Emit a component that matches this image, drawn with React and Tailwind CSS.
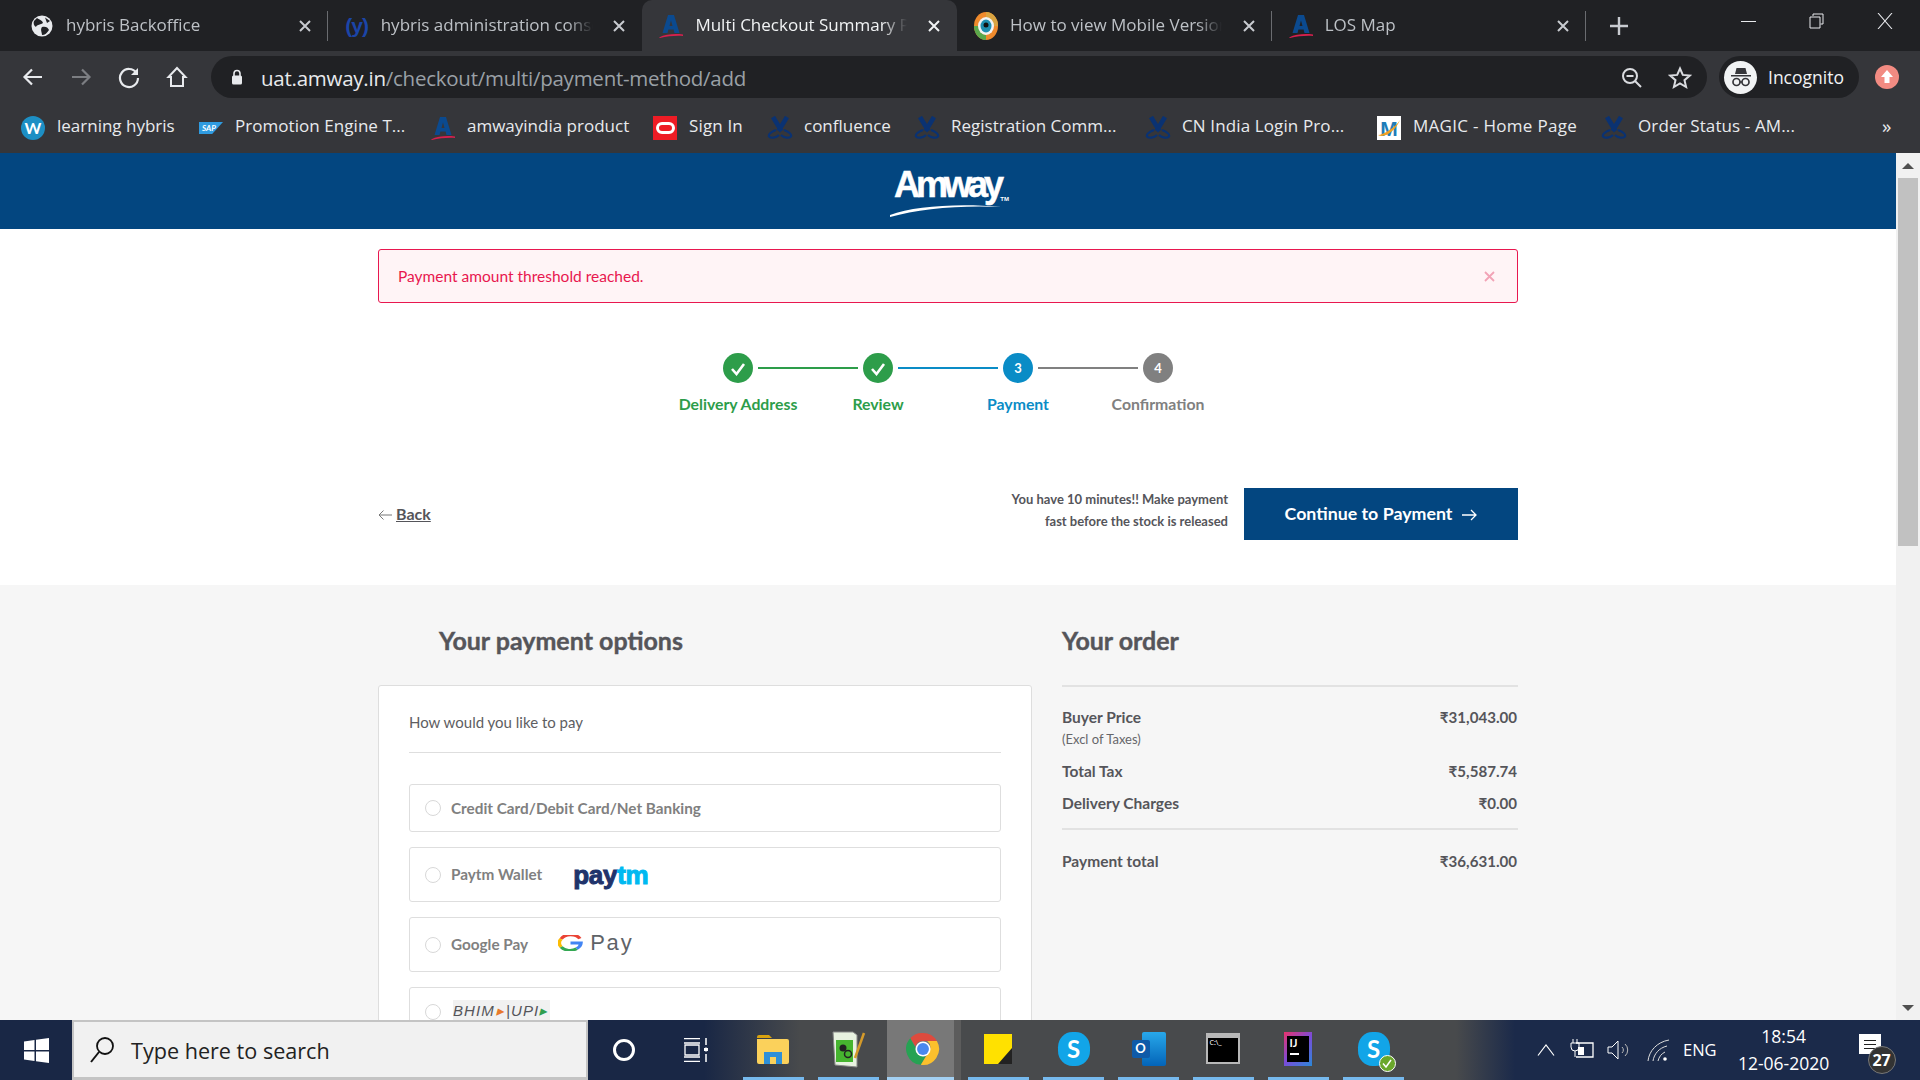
import React from "react";

const ui = "font-['Open_Sans','Noto_Sans',sans-serif]";
const web = "font-['Lato','Noto_Sans',sans-serif]";
const arial = "font-['Liberation_Sans',sans-serif]";

function CloseX({ color = "#dadce0" }) {
  return (
    <svg width="12" height="12" viewBox="0 0 12 12" className="shrink-0">
      <path d="M1 1l10 10M11 1L1 11" stroke={color} strokeWidth="2" />
    </svg>
  );
}

function AmwayFav({ size = 24 }) {
  return (
    <svg width={size} height={size} viewBox="0 0 24 24" className="shrink-0">
      <path d="M9 1 H15 L20.500 19 H15.500 L14.600 15.500 H9.400 L8.500 19 H3.500 Z M12 6.500 L10.500 12 H13.500 Z" fill="#0b4a8f" fillRule="evenodd" />
      <path d="M0 23.500 C7 20 16 19.500 24 20.500 L24 22 C16 21.500 8 22.500 1 24Z" fill="#d6204e" />
    </svg>
  );
}

function ScissorX() {
  return (
    <svg width="26" height="24" viewBox="0 0 26 24" className="shrink-0">
      <path d="M6 1 L14.500 15 M20 1 L11.500 15" stroke="#0a3272" strokeWidth="4.600" fill="none" />
      <path d="M9 14 C4 16 1 18 2 20.500 C4 22.500 9 22 12 19 M17 14 C22 16 25 18 24 20.500 C22 22.500 17 22 14 19" stroke="#0a3272" strokeWidth="2.200" fill="none" />
    </svg>
  );
}

function GlobeFav() {
  return (
    <svg width="22" height="22" viewBox="0 0 22 22" className="shrink-0">
      <circle cx="11" cy="11" r="10.500" fill="#e8eaed" />
      <path d="M6 3 C9 5 11 5 12 8 C10 10 6 9 5 12 C3 11 2 8 3 6Z M11 12 C14 11 17 12 18 15 C16 18 14 20 11 20 C11 17 9 15 11 12Z M14 2.500 L19 6 L16 8Z" fill="#202124" />
    </svg>
  );
}

function ChromeIcon({ size = 36 }) {
  return (
    <svg width={size} height={size} viewBox="0 0 36 36" className="shrink-0">
      <path d="M18 1a17 17 0 0 1 14.700 8.500H18a8.500 8.500 0 0 0-8 5.500L4.500 6.500A17 17 0 0 1 18 1z" fill="#dd4b3e" />
      <path d="M4.500 6.500L12 20a8.500 8.500 0 0 0 9 5.900L15.700 34.800A17 17 0 0 1 4.500 6.500z" fill="#26a253" />
      <path d="M32.700 9.500A17 17 0 0 1 15.700 34.800L23.500 22a8.500 8.500 0 0 0-1-12.500z" fill="#fbc02d" />
      <circle cx="18" cy="18" r="8" fill="#fff" />
      <circle cx="18" cy="18" r="6.300" fill="#4a88ee" />
    </svg>
  );
}

function TabFavMobile() {
  return (
    <svg width="24" height="28" viewBox="0 0 24 28" className="shrink-0">
      <ellipse cx="12" cy="14" rx="12" ry="14" fill="#ef8a2c" />
      <path d="M12 0a12 14 0 0 1 12 14h-5a7 8 0 0 0-7-8z" fill="#d9a441" />
      <path d="M0 14a12 14 0 0 0 12 14v-5a7 8 0 0 1-7-9z" fill="#5aa84c" />
      <ellipse cx="12" cy="14" rx="8" ry="9" fill="#f3f3f3" />
      <ellipse cx="12" cy="14" rx="5.500" ry="6.500" fill="#1e8fb0" />
      <circle cx="12" cy="13" r="2.500" fill="#111" />
    </svg>
  );
}

function Tab({ icon, title, active, sep }) {
  return (
    <div className={"relative flex h-[51px] w-[314.700px] shrink-0 items-center pl-[17px] pr-[17px] " + (active ? "rounded-t-[10px] bg-[#35363a]" : "")}>
      <div className="flex w-[24px] shrink-0 justify-center">{icon}</div>
      <div className={"mb-[2px] ml-[12px] w-[212px] overflow-hidden whitespace-nowrap text-[17px] leading-[24px] [mask-image:linear-gradient(90deg,#000_88%,transparent_100%)] " + ui + " " + (active ? "text-[#f1f3f4]" : "text-[#bdc1c6]")}>
        {title}
      </div>
      <div className="ml-auto"><CloseX color={active ? "#f1f3f4" : "#c8cbd0"} /></div>
      {sep && <div className="absolute right-0 top-[11px] h-[30px] w-[1px] bg-[#6a6c70]" />}
    </div>
  );
}

function Mark({ kind }) {
  if (kind === "wp")
    return (
      <div className={"flex h-[24px] w-[24px] items-center justify-center rounded-full bg-[#1d8fc4] text-[16px] font-bold text-white " + web}>W</div>
    );
  if (kind === "sap")
    return (
      <div className={"flex h-[12px] w-[24px] items-center justify-center bg-[#2f9be0] pr-[4px] text-[8px] font-bold italic leading-none text-white [clip-path:polygon(0_0,100%_0,55%_100%,0_100%)] " + web}>SAP</div>
    );
  if (kind === "am") return <AmwayFav />;
  if (kind === "or")
    return (
      <div className="flex h-[24px] w-[24px] items-center justify-center bg-[#ee1c25]">
        <div className="h-[12px] w-[19px] rounded-[6px] border-[3px] border-white" />
      </div>
    );
  if (kind === "x") return <ScissorX />;
  if (kind === "m")
    return (
      <div className="relative flex h-[24px] w-[24px] items-center justify-center overflow-hidden bg-white">
        <span className={"text-[21px] font-black leading-none text-[#1f7cb8] " + arial}>M</span>
        <svg width="24" height="24" viewBox="0 0 24 24" className="absolute inset-0">
          <path d="M1 19 C6 19 18 12 23 4 C19 14 8 23 1 19Z" fill="#f0a020" />
        </svg>
      </div>
    );
  return null;
}

const bookmarks = [
  { k: "wp", t: "learning hybris", w: "w-[199px] pl-[21px]", s: "" },
  { k: "sap", t: "Promotion Engine T...", w: "w-[232px]", s: "tracking-[0.050px]" },
  { k: "am", t: "amwayindia product", w: "w-[222px]", s: "" },
  { k: "or", t: "Sign In", w: "w-[115px]", s: "tracking-[0.150px]" },
  { k: "x", t: "confluence", w: "w-[147px]", s: "" },
  { k: "x", t: "Registration Comm...", w: "w-[231px]", s: "" },
  { k: "x", t: "CN India Login Pro...", w: "w-[231px]", s: "tracking-[0.120px]" },
  { k: "m", t: "MAGIC - Home Page", w: "w-[225px]", s: "tracking-[0.290px]" },
  { k: "x", t: "Order Status - AM...", w: "w-[231px]", s: "tracking-[0.120px]" },
];

function ChromeBar() {
  return (
    <div className="shrink-0">
      <div className="flex h-[51px] items-end bg-[#202124] pl-[13px]">
        <Tab icon={<GlobeFav />} title="hybris Backoffice" sep />
        <Tab
          icon={<span className={"text-[21px] font-black leading-none tracking-[-1px] text-[#1b45a8] " + arial}>(y)</span>}
          title="hybris administration console"
        />
        <Tab icon={<AmwayFav />} title="Multi Checkout Summary Page" active />
        <Tab icon={<TabFavMobile />} title="How to view Mobile Version of" sep />
        <Tab icon={<AmwayFav />} title="LOS Map" sep />
        <svg width="18" height="18" viewBox="0 0 18 18" className="ml-[24px] mb-[16px] shrink-0">
          <path d="M9 0v18M0 9h18" stroke="#c8cbd0" strokeWidth="2.400" />
        </svg>
        <div className="ml-auto flex h-[51px] items-start">
          <div className="flex h-[42px] w-[68px] items-center justify-center">
            <div className="h-[1px] w-[15px] bg-[#e8eaed]" />
          </div>
          <div className="flex h-[42px] w-[68px] items-center justify-center">
            <svg width="15" height="16" viewBox="0 0 15 16">
              <path d="M4 3V1h10v10h-2.500M1 4h10v11H1z" stroke="#e8eaed" fill="none" />
            </svg>
          </div>
          <div className="flex h-[42px] w-[70px] items-center justify-center">
            <svg width="16" height="16" viewBox="0 0 16 16">
              <path d="M1 0l14 16M15 0L1 16" stroke="#e8eaed" strokeWidth="1.100" />
            </svg>
          </div>
        </div>
      </div>
      <div className="flex h-[52px] items-center bg-[#35363a]">
        <div className="flex w-[211px] shrink-0 items-center pl-[21px]">
          <svg width="24" height="24" viewBox="0 0 24 24" className="mr-[24px]">
            <path d="M21 12H4M11 4.500L3.500 12l7.500 7.500" stroke="#e8eaed" strokeWidth="2.200" fill="none" />
          </svg>
          <svg width="24" height="24" viewBox="0 0 24 24" className="mr-[24px]">
            <path d="M3 12h17M13 4.500l7.500 7.500-7.500 7.500" stroke="#7c7e82" strokeWidth="2.200" fill="none" />
          </svg>
          <svg width="24" height="24" viewBox="0 0 24 24" className="mr-[24px]">
            <path d="M19.500 8A9 9 0 1 0 21 13" stroke="#e8eaed" strokeWidth="2.200" fill="none" />
            <path d="M21 3v7h-7z" fill="#e8eaed" />
          </svg>
          <svg width="24" height="24" viewBox="0 0 24 24">
            <path d="M12 3L3.500 12H6v9h12v-9h2.500z" stroke="#e8eaed" strokeWidth="2" fill="none" />
          </svg>
        </div>
        <div className="flex h-[42px] w-[1496px] shrink-0 items-center rounded-full bg-[#202124] pl-[20px] pr-[15px]">
          <svg width="12" height="16" viewBox="0 0 12 16" className="shrink-0">
            <path d="M3 7V4.500a3 3 0 0 1 6 0V7" stroke="#e8eaed" strokeWidth="1.600" fill="none" />
            <rect x="1" y="6.500" width="10" height="9" rx="1.500" fill="#e8eaed" />
          </svg>
          <div className={"ml-[18px] mt-[2px] whitespace-nowrap text-[20.500px] leading-[28px] tracking-[-0.250px] " + ui}>
            <span className="text-[#e8eaed]">uat.amway.in</span>
            <span className="text-[#9aa0a6]">/checkout/multi/payment-method/add</span>
          </div>
          <div className="ml-auto mt-[1px] flex items-center gap-[24px]">
            <svg width="24" height="24" viewBox="0 0 24 24">
              <circle cx="10" cy="10" r="7" stroke="#dadce0" strokeWidth="2" fill="none" />
              <path d="M6.500 10h7M15 15l6 6" stroke="#dadce0" strokeWidth="2" />
            </svg>
            <svg width="24" height="24" viewBox="0 0 24 24">
              <path d="M12 2.500l2.800 6.400 7 .7-5.300 4.600 1.600 6.800-6.100-3.600-6.100 3.600 1.600-6.800-5.300-4.600 7-.7z" stroke="#dadce0" strokeWidth="2" fill="none" />
            </svg>
          </div>
        </div>
        <div className="ml-[12px] flex h-[42px] w-[140px] shrink-0 items-center rounded-full bg-[#202124] pl-[5px]">
          <div className="flex h-[33px] w-[33px] shrink-0 items-center justify-center rounded-full bg-[#f1f3f4]">
            <svg width="26" height="26" viewBox="0 0 26 26">
              <path d="M3 11h20v1.500H3zM7 10l1.500-6h9L19 10z" fill="#35363a" />
              <circle cx="8.500" cy="18" r="3.500" stroke="#35363a" strokeWidth="1.700" fill="none" />
              <circle cx="17.500" cy="18" r="3.500" stroke="#35363a" strokeWidth="1.700" fill="none" />
              <path d="M12 18h2" stroke="#35363a" strokeWidth="1.700" />
            </svg>
          </div>
          <span className={"ml-[11px] text-[17.500px] text-[#f1f3f4] " + ui}>Incognito</span>
        </div>
        <div className="ml-[16px] flex h-[24px] w-[24px] shrink-0 items-center justify-center rounded-full bg-[#f28b82]">
          <svg width="14" height="16" viewBox="0 0 14 16">
            <path d="M7 1l6 7H9.500v6h-5V8H1z" fill="#fff" />
          </svg>
        </div>
      </div>
      <div className="flex h-[50px] items-center bg-[#35363a]">
        {bookmarks.map((b, i) => (
          <div key={i} className={"flex h-[50px] shrink-0 items-center " + b.w}>
            <div className="flex w-[24px] shrink-0 justify-center"><Mark kind={b.k} /></div>
            <span className={"mb-[4px] ml-[12px] whitespace-nowrap text-[17px] leading-[24px] text-[#e8eaed] " + ui + " " + b.s}>{b.t}</span>
          </div>
        ))}
        <span className={"mb-[4px] ml-[49px] text-[19px] leading-[24px] text-[#e8eaed] " + ui}>»</span>
      </div>
    </div>
  );
}

function Check() {
  return (
    <svg width="16" height="14" viewBox="0 0 16 14">
      <path d="M2 7l4.500 5L14 2" stroke="#fff" strokeWidth="2.600" fill="none" />
    </svg>
  );
}

function Circle({ bg, children }) {
  return (
    <div className={"flex h-[30px] w-[30px] shrink-0 items-center justify-center rounded-full pt-[1px] text-[13px] font-bold text-white " + bg}>
      {children}
    </div>
  );
}

function Stepper() {
  return (
    <div className="mt-[50px]">
      <div className="flex items-center justify-center">
        <Circle bg="bg-[#2d9d4a]"><Check /></Circle>
        <div className="mx-[5px] h-[2px] w-[100px] bg-[#2d9d4a]" />
        <Circle bg="bg-[#2d9d4a]"><Check /></Circle>
        <div className="mx-[5px] h-[2px] w-[100px] bg-[#0a8cc6]" />
        <Circle bg="bg-[#0a8cc6]">3</Circle>
        <div className="mx-[5px] h-[2px] w-[100px] bg-[#808080]" />
        <Circle bg="bg-[#808080]">4</Circle>
      </div>
      <div className="mt-[11px] flex justify-center text-center text-[15.800px] font-bold leading-[20px]">
        <div className="w-[140px] text-[#2d9d4a]">Delivery Address</div>
        <div className="w-[140px] text-[#2d9d4a]">Review</div>
        <div className="w-[140px] text-[#0a8cc6]">Payment</div>
        <div className="w-[140px] text-[#808080]">Confirmation</div>
      </div>
    </div>
  );
}

function PayRow({ h, radio = "", children }) {
  return (
    <div className={"flex items-center rounded-[3px] border border-[#dedede] pl-[15px] " + h}>
      <div className={"h-[16px] w-[16px] shrink-0 rounded-full border border-[#d8d8d8] " + radio} />
      {children}
    </div>
  );
}

function OrderRow({ label, value, mt }) {
  return (
    <div className={"flex items-center justify-between text-[15.500px] font-bold leading-[20px] text-[#55555a] " + mt}>
      <span>{label}</span>
      <span className="mr-[1px] text-[15.100px]">{value}</span>
    </div>
  );
}

function Page() {
  return (
    <div className={"min-w-0 flex-1 overflow-hidden bg-white " + web}>
      <div className="flex h-[76px] items-center justify-center bg-[#034680]">
        <div className="relative h-[52px] w-[118px]">
          <span className={"absolute left-[5px] top-[-2px] text-[36px] font-bold leading-[44px] tracking-[-4px] text-white [-webkit-text-stroke:0.5px_#fff] " + arial}>Amway</span>
          <span className={"absolute right-[-2px] top-[31px] text-[6px] font-bold leading-none text-white " + arial}>TM</span>
          <svg width="118" height="14" viewBox="0 0 118 14" className="absolute left-0 top-[38px]">
            <path d="M1 12 C25 3 70 0 112 4 C70 2 30 6 1 14Z" fill="#fff" />
          </svg>
        </div>
      </div>
      <div className="mx-auto w-[1140px]">
        <div className="mt-[20px] flex h-[54px] items-center justify-between rounded-[3px] border border-[#e8174f] bg-[#fff4f6] pl-[19px] pr-[22px] pt-[1px] text-[15.500px] text-[#e8174f]">
          <span>Payment amount threshold reached.</span>
          <svg width="11" height="11" viewBox="0 0 11 11">
            <path d="M1 1l9 9M10 1l-9 9" stroke="#f2a3b6" strokeWidth="1.800" />
          </svg>
        </div>
        <Stepper />
        <div className="mt-[74px] flex h-[52px] items-center justify-between">
          <div className="flex items-center">
            <svg width="14" height="10" viewBox="0 0 14 10" className="mr-[4px] mt-[2px]">
              <path d="M14 5H1M5.500.5L1 5l4.500 4.500" stroke="#777" strokeWidth="1" fill="none" />
            </svg>
            <span className="text-[16px] font-bold text-[#55555a] underline">Back</span>
          </div>
          <div className="flex items-center">
            <div className="mb-[9px] mr-[16px] text-right text-[13px] font-bold leading-[22px] text-[#55555a]">
              You have 10 minutes!! Make payment<br />fast before the stock is released
            </div>
            <div className="flex h-[52px] w-[274px] items-center justify-center bg-[#034680] pb-[1px] text-[17.800px] font-bold text-white">
              Continue to Payment
              <svg width="15" height="12" viewBox="0 0 15 12" className="ml-[10px] mt-[3px]">
                <path d="M0 6h14M9 1l5 5-5 5" stroke="#fff" strokeWidth="1.300" fill="none" />
              </svg>
            </div>
          </div>
        </div>
      </div>
      <div className="mt-[45px] h-[600px] bg-[#f6f6f6]">
        <div className="mx-auto flex w-[1140px]">
          <div className="w-[654px] shrink-0">
            <div className="mt-[36px] pl-[61px] text-[25px] font-bold leading-[38px] text-[#55555a] [-webkit-text-stroke:0.4px_#55555a]">Your payment options</div>
            <div className="mt-[26px] rounded-[3px] border border-[#dedede] bg-white px-[30px]">
              <div className="flex h-[67px] items-center border-b border-[#dedede] pt-[5px] text-[15px] leading-[20px] text-[#5e5e62]">How would you like to pay</div>
              <div className="mt-[31px] flex flex-col gap-[15px] pb-[30px] text-[15.300px] font-bold text-[#808080]">
                <PayRow h="h-[48px]"><span className="ml-[10px]">Credit Card/Debit Card/Net Banking</span></PayRow>
                <PayRow h="h-[55px]">
                  <span className="ml-[10px]">Paytm Wallet</span>
                  <span className={"ml-[31px] text-[26px] font-bold leading-none tracking-[-0.300px] " + arial}>
                    <span className="text-[#20336b] [-webkit-text-stroke:1px_#20336b]">pay</span><span className="text-[#00b9f1] [-webkit-text-stroke:1px_#00b9f1]">tm</span>
                  </span>
                </PayRow>
                <PayRow h="h-[55px]">
                  <span className="ml-[10px]">Google Pay</span>
                  <span className="mb-[3px] ml-[30px] flex items-center">
                    <svg width="25" height="16" viewBox="0 0 24 20" preserveAspectRatio="none">
                      <path d="M21 4.500A10 9 0 0 0 3 5" stroke="#ea4335" strokeWidth="3.500" fill="none" />
                      <path d="M3 5a10 9 0 0 0 0 10" stroke="#fbbc04" strokeWidth="3.500" fill="none" />
                      <path d="M3 15a10 9 0 0 0 15 2" stroke="#34a853" strokeWidth="3.500" fill="none" />
                      <path d="M18 17a9 9 0 0 0 4-7H12" stroke="#4285f4" strokeWidth="3.500" fill="none" />
                    </svg>
                    <span className={"ml-[7px] text-[22px] font-normal leading-none tracking-[1.800px] text-[#5f6368] " + arial}>Pay</span>
                  </span>
                </PayRow>
                <PayRow h="h-[55px]" radio="mb-[6px]">
                  <span className={"mb-[9px] ml-[12px] flex h-[20px] items-center bg-[#f1f1f1] pr-[2px] text-[15px] font-normal italic leading-none tracking-[1.100px] text-[#55555a] " + arial}>
                    BHIM<span className="mx-[1px] text-[#e8792b]">▸</span>|UPI<span className="text-[#2f9e4f]">▸</span>
                  </span>
                </PayRow>
              </div>
            </div>
          </div>
          <div className="ml-[30px] flex-1">
            <div className="mt-[36px] text-[25px] font-bold leading-[38px] text-[#55555a] [-webkit-text-stroke:0.4px_#55555a]">Your order</div>
            <div className="mt-[26px] border-t-2 border-[#e2e2e2]">
              <OrderRow mt="mt-[20px]" label="Buyer Price" value="₹31,043.00" />
              <div className="mt-[2px] text-[13px] leading-[20px] text-[#66666a]">(Excl of Taxes)</div>
              <OrderRow mt="mt-[12px]" label="Total Tax" value="₹5,587.74" />
              <OrderRow mt="mt-[12px]" label="Delivery Charges" value="₹0.00" />
              <div className="mt-[15px] border-t-2 border-[#e2e2e2]" />
              <OrderRow mt="mt-[21px]" label="Payment total" value="₹36,631.00" />
            </div>
          </div>
        </div>
      </div>
    </div>
  );
}

function Scrollbar() {
  return (
    <div className="flex w-[24px] shrink-0 flex-col bg-[#f1f1f1]">
      <div className="flex h-[25px] items-center justify-center">
        <div className="h-0 w-0 border-x-[6px] border-b-[6px] border-x-transparent border-b-[#505050]" />
      </div>
      <div className="mx-[2px] h-[368px] bg-[#c1c1c1]" />
      <div className="flex flex-1 items-end justify-center pb-[9px]">
        <div className="h-0 w-0 border-x-[6px] border-t-[6px] border-x-transparent border-t-[#505050]" />
      </div>
    </div>
  );
}

function Slot({ children, mode }) {
  return (
    <div className="relative flex h-[60px] w-[75px] shrink-0 items-center justify-center">
      {mode === "active" && <div className="absolute inset-y-0 left-[1px] w-[67px] bg-[#787878]" />}
      {mode === "active" && <div className="absolute inset-y-0 left-[68px] w-[7px] bg-[#5c5c5c]" />}
      <div className="relative mb-[3px]">{children}</div>
      <div className={"absolute bottom-0 h-[3px] " + (mode === "active" ? "left-[1px] w-[67px] bg-[#a3d0f2]" : "left-[7px] w-[61px] bg-[#76b9ed]")} />
    </div>
  );
}

function SkypeGlyph({ size = 34 }) {
  return (
    <div style={{ width: size, height: size + 2 }} className={"flex items-center justify-center rounded-[45%] bg-[#12a5e8] font-bold text-white " + web}>
      <span className="text-[24px] leading-none">S</span>
    </div>
  );
}

function Taskbar() {
  return (
    <div className="flex h-[60px] shrink-0 items-center bg-[linear-gradient(90deg,#192745_0,#192745_704px,#484a4c_800px,#484a4c_1456px,#1b2a4a_1515px,#1b2a4a_100%)]">
      <div className="flex h-[60px] w-[72px] shrink-0 items-center justify-center">
        <svg width="25" height="25" viewBox="0 0 25 25">
          <path d="M0 3.500l10.500-1.500v10H0zM12 1.800L25 0v12H12zM0 13.500h10.500V23L0 21.500zM12 13.500h13V25l-13-1.800z" fill="#fff" />
        </svg>
      </div>
      <div className="flex h-[60px] w-[516px] shrink-0 items-center border-[2px] border-b-[3px] border-[#c4c4c4] bg-[#f1f1f1] pl-[15px]">
        <svg width="26" height="28" viewBox="0 0 26 28">
          <circle cx="16" cy="10" r="8" stroke="#111" strokeWidth="1.800" fill="none" />
          <path d="M10 16L2 26" stroke="#111" strokeWidth="2" />
        </svg>
        <span className={"ml-[16px] mt-[3px] text-[21.600px] text-[#222] " + ui}>Type here to search</span>
      </div>
      <div className="flex h-[60px] w-[72px] shrink-0 items-center justify-center">
        <div className="h-[22px] w-[22px] rounded-full border-[3px] border-white" />
      </div>
      <div className="flex h-[60px] w-[76px] shrink-0 items-center justify-center pr-[4px]">
        <svg width="26" height="24" viewBox="0 0 26 24">
          <path d="M1 .5h16M1 23.500h16M1 5h16M1 19h16M2 7v10h14V7z" stroke="#fff" strokeWidth="1.300" fill="none" />
          <path d="M23 0v7M23 9.500v4M23 16v8" stroke="#fff" strokeWidth="1.500" />
          <path d="M21 10h4v3h-4z" fill="#fff" />
        </svg>
      </div>
      <Slot>
        <div className="mr-[2px]">
          <svg width="32" height="30" viewBox="0 0 32 30">
            <path d="M0 3a2 2 0 0 1 2-2h10l3 3H0z" fill="#d9a20e" />
            <path d="M0 5h30a2 2 0 0 1 2 2v21a2 2 0 0 1-2 2H2a2 2 0 0 1-2-2z" fill="#fbd15b" />
            <path d="M7 30V18h18v12h-6v-7h-6v7z" fill="#2e8fd8" />
          </svg>
        </div>
      </Slot>
      <Slot>
        <svg width="36" height="38" viewBox="0 0 36 38">
          <path d="M2 2h20l4 3v32l-22-2z" fill="#e8f2e0" stroke="#888" />
          <path d="M5 10h17v22H5z" fill="#46b52f" />
          <circle cx="12" cy="18" r="3.500" fill="#222" />
          <circle cx="17" cy="24" r="3.500" fill="none" stroke="#222" strokeWidth="1.500" />
          <path d="M24 28L33 3" stroke="#d49a2a" strokeWidth="2.500" />
        </svg>
      </Slot>
      <Slot mode="active"><div className="mr-[1px]"><ChromeIcon size={34} /></div></Slot>
      <Slot>
        <div className="mr-[2px]">
          <svg width="28" height="30" viewBox="0 0 28 30">
            <path d="M0 0h28v30H0z" fill="#ffe100" />
            <path d="M28 14L14 30h14z" fill="#222" />
          </svg>
        </div>
      </Slot>
      <Slot><SkypeGlyph size={32} /></Slot>
      <Slot>
        <div className="relative h-[34px] w-[34px]">
          <div className="absolute right-0 top-0 h-[34px] w-[24px] rounded-[2px] bg-[linear-gradient(180deg,#28a8ea,#0364b8)]" />
          <div className={"absolute left-0 top-[8px] flex h-[18px] w-[18px] items-center justify-center rounded-[2px] bg-[#0f5aa8] text-[13px] font-bold text-white " + web}>O</div>
        </div>
      </Slot>
      <Slot>
        <div className="mr-[2px] w-[34px] border-2 border-[#b8b8b8] bg-black">
          <div className="h-[3px] bg-[#b8b8b8]" />
          <div className="h-[24px] pl-[2px] text-[7px] leading-[10px] text-white">C:\_</div>
        </div>
      </Slot>
      <Slot>
        <div className="mr-[2px] flex h-[34px] w-[28px] items-center justify-center bg-[linear-gradient(135deg,#e8336c,#7b4bd8,#2a89d8)]">
          <div className={"flex h-[26px] w-[22px] flex-col bg-black pl-[3px] text-[11px] font-bold leading-[13px] text-white " + web}>
            IJ
            <div className="mt-[4px] h-[2px] w-[9px] bg-white" />
          </div>
        </div>
      </Slot>
      <Slot>
        <div className="relative">
          <SkypeGlyph size={32} />
          <div className="absolute -bottom-[6px] -right-[6px] flex h-[17px] w-[17px] items-center justify-center rounded-full border border-white bg-[#6aa72b]">
            <svg width="10" height="9" viewBox="0 0 10 9"><path d="M1 4.500L4 8l5-7" stroke="#fff" strokeWidth="1.500" fill="none" /></svg>
          </div>
        </div>
      </Slot>
      <div className={"flex h-[60px] flex-1 items-center text-white " + ui}>
        <svg width="18" height="12" viewBox="0 0 18 12" className="ml-[126px] shrink-0">
          <path d="M1 11.500L9 1l8 10.500" stroke="#fff" strokeWidth="1.200" fill="none" />
        </svg>
        <svg width="26" height="22" viewBox="0 0 26 22" className="ml-[15px] shrink-0">
          <path d="M6 4h17v14H6" stroke="#fff" strokeWidth="1.300" fill="none" />
          <path d="M8 8h6v8H8z" fill="#fff" />
          <path d="M3 0v4M7 0v4M1 4h8v4a4 4 0 0 1-8 0zM5 12v6" stroke="#fff" fill="none" />
        </svg>
        <svg width="24" height="22" viewBox="0 0 24 22" className="ml-[11px] shrink-0">
          <path d="M1 8h4l6-6v18l-6-6H1z" stroke="#fff" fill="none" />
          <path d="M15 8a4 4 0 0 1 0 6M18 5a8 8 0 0 1 0 12" stroke="#bbb" fill="none" />
        </svg>
        <svg width="24" height="24" viewBox="0 0 24 24" className="ml-[16px] shrink-0">
          <path d="M1 23C2 13 10 4 22 2M6 23c1-7 6-13 14-15M11 23c1-4 3-7 7-9" stroke="#ddd" fill="none" />
          <circle cx="18" cy="21" r="1.800" fill="#fff" />
        </svg>
        <span className="ml-[12px] text-[16.500px] leading-none">ENG</span>
        <div className="ml-[21px] w-[92px] text-center text-[17.500px] leading-[27px]">
          <div>18:54</div>
          <div className="whitespace-nowrap">12-06-2020</div>
        </div>
        <div className="relative ml-[27px] mt-[8px] h-[40px] w-[39px] shrink-0">
          <div className="absolute left-[2px] top-0 flex h-[20px] w-[22px] flex-col justify-center gap-[3px] bg-white px-[5px]">
            <div className="h-[1px] bg-[#222]" />
            <div className="h-[1px] bg-[#222]" />
            <div className="h-[1px] bg-[#222]" />
          </div>
          <div className="absolute bottom-0 right-0 flex h-[28px] w-[28px] items-center justify-center rounded-full border border-[#777] bg-[#333] text-[16px] font-bold">27</div>
        </div>
      </div>
    </div>
  );
}

export default function App() {
  return (
    <div className="flex h-screen w-full flex-col overflow-hidden bg-white">
      <ChromeBar />
      <div className="flex min-h-0 flex-1">
        <Page />
        <Scrollbar />
      </div>
      <Taskbar />
    </div>
  );
}
